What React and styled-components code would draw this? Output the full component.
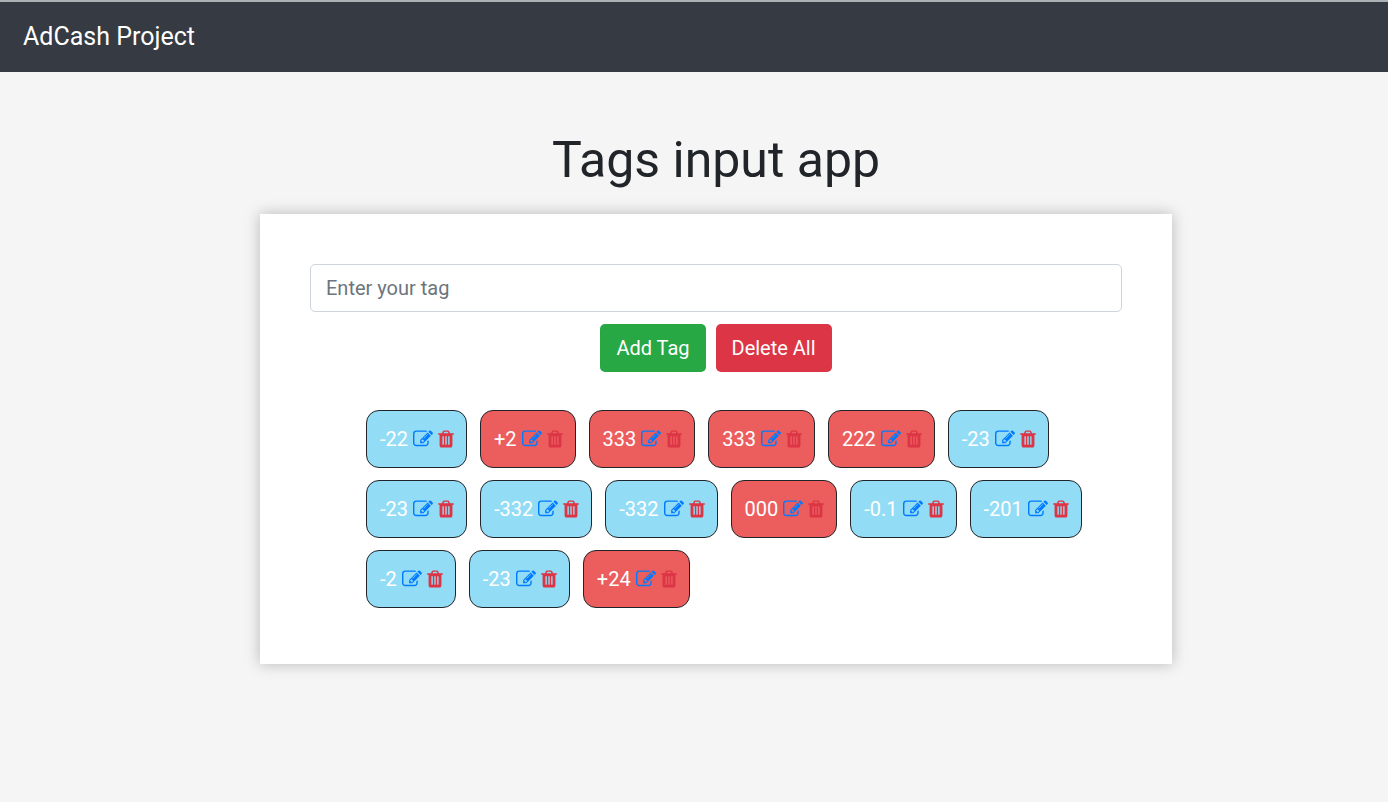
import React, { useState } from "react";
import styled, { createGlobalStyle } from "styled-components";

const GlobalStyle = createGlobalStyle`
  *, *::before, *::after { box-sizing: border-box; }
  body {
    margin: 0;
    background: #f5f5f5;
    color: #212529;
    font-family: Roboto, "Liberation Sans", sans-serif;
    font-size: 20px;
    line-height: 30px;
  }
`;

const Navbar = styled.header`
  display: flex;
  align-items: center;
  min-height: 72px;
  padding: 0 23px;
  border-top: 2px solid #adb1b5;
  background: #363a42;
`;

const Brand = styled.a`
  color: #fff;
  font-size: 25px;
  line-height: 38px;
  text-decoration: none;
`;

const Main = styled.main`
  padding: 58px 0 58px 44px;
`;

const Content = styled.div`
  max-width: 912px;
  margin: 0 auto;
`;

const Title = styled.h1`
  margin: 0 0 24px;
  font-size: 50px;
  font-weight: 400;
  line-height: 60px;
  text-align: center;
`;

const Card = styled.section`
  padding: 50px;
  background: #fff;
  box-shadow: 0 0 14px rgba(0, 0, 0, 0.25);
`;

const TagInput = styled.input`
  display: block;
  width: 100%;
  height: 48px;
  padding: 8px 15px;
  border: 1px solid #ced4da;
  border-radius: 5px;
  background: #fff;
  color: #495057;
  font: inherit;
  &::placeholder {
    color: #6c757d;
    opacity: 1;
  }
`;

const Actions = styled.div`
  display: flex;
  justify-content: center;
  gap: 10px;
  margin-top: 12px;
`;

const Button = styled.button`
  height: 48px;
  padding: 0 16px;
  border: 0;
  border-radius: 5px;
  background: ${(p) => (p.$danger ? "#dc3545" : "#28a745")};
  color: #fff;
  font: inherit;
  cursor: pointer;
`;

const TagList = styled.ul`
  display: flex;
  flex-wrap: wrap;
  gap: 12px 13px;
  margin: 32px 0 0;
  padding: 6px 6px 6px 56px;
  list-style: none;
`;

const Tag = styled.li`
  display: flex;
  align-items: center;
  gap: 5px;
  height: 58px;
  padding: 0 12px 0 13px;
  border: 1px solid #212529;
  border-radius: 13px;
  background: ${(p) => (p.$negative ? "#93dcf5" : "#ec5e5e")};
  color: #fff;
`;

const IconButton = styled.button`
  display: flex;
  padding: 0;
  border: 0;
  background: none;
  color: ${(p) => (p.$danger ? "#dc3545" : "#007bff")};
  cursor: pointer;
`;

const EditIcon = () => (
  <svg width="20" height="20" viewBox="0 0 1792 1792" fill="currentColor" aria-hidden="true">
    <path d="M888 1184l116-116-152-152-116 116v56h96v96h56zm440-720q-16-16-33 1l-350 350q-17 17-1 33t33-1l350-350q17-17 1-33zm80 594v190q0 119-84.5 203.5t-203.5 84.5h-832q-119 0-203.5-84.5t-84.5-203.5v-832q0-119 84.5-203.5t203.5-84.5h832q63 0 117 25 15 7 18 23 3 17-9 29l-49 49q-14 14-32 8-23-6-45-6h-832q-66 0-113 47t-47 113v832q0 66 47 113t113 47h832q66 0 113-47t47-113v-126q0-13 9-22l64-64q15-15 35-7t20 29zm-96-738l288 288-672 672h-288v-288zm444 132l-92 92-288-288 92-92q28-28 68-28t68 28l152 152q28 28 28 68t-28 68z" />
  </svg>
);

const TrashIcon = () => (
  <svg width="16" height="20" viewBox="192 0 1408 1792" fill="currentColor" aria-hidden="true">
    <path d="M704 1376v-704q0-14-9-23t-23-9h-64q-14 0-23 9t-9 23v704q0 14 9 23t23 9h64q14 0 23-9t9-23zm256 0v-704q0-14-9-23t-23-9h-64q-14 0-23 9t-9 23v704q0 14 9 23t23 9h64q14 0 23-9t9-23zm256 0v-704q0-14-9-23t-23-9h-64q-14 0-23 9t-9 23v704q0 14 9 23t23 9h64q14 0 23-9t9-23zm-544-992h448l-48-117q-7-9-17-11h-317q-10 2-17 11zm928 32v64q0 14-9 23t-23 9h-96v948q0 83-47 143.5t-113 60.5h-832q-66 0-113-58.5t-47-141.5v-952h-96q-14 0-23-9t-9-23v-64q0-14 9-23t23-9h309l70-167q15-37 54-63t79-26h320q40 0 79 26t54 63l70 167h309q14 0 23 9t9 23z" />
  </svg>
);

const INITIAL = [
  "-22", "+2", "333", "333", "222", "-23",
  "-23", "-332", "-332", "000", "-0.1", "-201",
  "-2", "-23", "+24",
].map((value, id) => ({ id, value }));

export default function App() {
  const [tags, setTags] = useState(INITIAL);
  const [draft, setDraft] = useState("");

  const addTag = () => {
    const value = draft.trim();
    if (!value) return;
    setTags([...tags, { id: Date.now(), value }]);
    setDraft("");
  };

  const editTag = (tag) => {
    setDraft(tag.value);
    setTags(tags.filter((t) => t.id !== tag.id));
  };

  return (
    <>
      <GlobalStyle />
      <Navbar>
        <Brand href="#">AdCash Project</Brand>
      </Navbar>
      <Main>
        <Content>
          <Title>Tags input app</Title>
          <Card>
            <TagInput
              type="text"
              aria-label="Enter your tag"
              placeholder="Enter your tag"
              value={draft}
              onChange={(e) => setDraft(e.target.value)}
            />
            <Actions>
              <Button type="button" onClick={addTag}>Add Tag</Button>
              <Button type="button" $danger onClick={() => setTags([])}>Delete All</Button>
            </Actions>
            <TagList>
              {tags.map((tag) => (
                <Tag key={tag.id} $negative={tag.value.startsWith("-")}>
                  <span>{tag.value}</span>
                  <IconButton type="button" aria-label={`Edit ${tag.value}`} onClick={() => editTag(tag)}>
                    <EditIcon />
                  </IconButton>
                  <IconButton
                    type="button"
                    $danger
                    aria-label={`Delete ${tag.value}`}
                    onClick={() => setTags(tags.filter((t) => t.id !== tag.id))}
                  >
                    <TrashIcon />
                  </IconButton>
                </Tag>
              ))}
            </TagList>
          </Card>
        </Content>
      </Main>
    </>
  );
}
